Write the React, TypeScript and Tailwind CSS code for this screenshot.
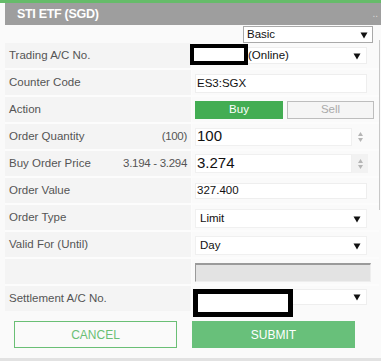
import React from "react";

const Arrow = () => (
  <svg width="8" height="8" viewBox="0 0 8 8" className="shrink-0">
    <path d="M0.5 1.5 H7.5 L4 7.5 Z" fill="#111" />
  </svg>
);

const Spinner = () => (
  <div className="flex flex-col items-center justify-center gap-[2px] w-[16px]">
    <svg width="5" height="4" viewBox="0 0 5 4"><path d="M0 4 L2.5 0 L5 4 Z" fill="#b5b5b5" /></svg>
    <svg width="5" height="4" viewBox="0 0 5 4"><path d="M0 0 L2.5 4 L5 0 Z" fill="#b5b5b5" /></svg>
  </div>
);

function Row({ label, hint, children }: { label: string; hint?: string; children?: React.ReactNode }) {
  return (
    <div className="grid grid-cols-[186px_1fr] gap-x-[1px] h-[25px]">
      <div className="bg-[#f4f4f4] flex items-center justify-between pl-[4px] pr-[4px] pt-[1px] text-[11.5px] text-[#555]">
        <span>{label}</span>
        {hint && <span className="tracking-[-0.3px]">{hint}</span>}
      </div>
      <div className="bg-[#fafafa] flex items-center pl-[3px] relative">{children}</div>
    </div>
  );
}

export default function App() {
  return (
    <div
      className="w-[381px] h-[361px] bg-[#fafafa] relative overflow-hidden"
      style={{ fontFamily: '"Liberation Sans", Arial, sans-serif' }}
    >
      <div className="h-[3px] bg-[#66bb6a]" />
      <div className="ml-[5px] h-[22px] bg-[#9e9e9e] flex items-center pl-[12px] pr-[3px] justify-between">
        <span className="text-white font-bold text-[12.5px] tracking-[-0.3px]">STI ETF (SGD)</span>
        <span className="text-[#d8d8d8] text-[10px] leading-none">..</span>
      </div>
      <div className="ml-[5px] w-[374px] bg-[#fcfcfc] flex flex-col">
        <div className="h-[18px] flex justify-end pr-[6px] bg-[#fafafa]">
          <div className="mt-[1px] w-[130px] h-[17px] bg-white border border-[#a9a9a9] flex items-center justify-between pl-[3px] pr-[4px] text-[11.5px] text-[#111]">
            <span>Basic</span>
            <Arrow />
          </div>
        </div>
        <div className="flex flex-col gap-[2px]">
          <Row label="Trading A/C No.">
            <div className="w-[172px] h-[17px] bg-white border border-[#eeeeee] flex items-center justify-between pl-[52px] pr-[5px] text-[11.5px] text-[#111]">
              <span>(Online)</span>
              <Arrow />
            </div>
            <div className="absolute left-[-2px] top-[1px] w-[58px] h-[21px] border-[4px] border-black bg-white" />
          </Row>
          <Row label="Counter Code">
            <div className="w-[172px] h-[19px] bg-white border border-[#eeeeee] flex items-center pl-[1px] text-[11.5px] text-[#111] mt-[2px]">
              ES3:SGX
            </div>
          </Row>
          <Row label="Action">
            <div className="flex gap-[4px] mt-[1px]">
              <div className="w-[88px] h-[18px] bg-[#43ad53] text-white text-[11.5px] flex items-center justify-center">Buy</div>
              <div className="w-[87px] h-[18px] bg-[#f5f5f5] border border-[#bdbdbd] text-[#aaaaaa] text-[11.5px] flex items-center justify-center">Sell</div>
            </div>
          </Row>
          <Row label="Order Quantity" hint="(100)">
            <div className="flex items-center">
              <div className="w-[157px] h-[18px] bg-white border border-[#f0f0f0] flex items-center pl-[1px] text-[15px] text-[#111]">100</div>
              <Spinner />
            </div>
          </Row>
          <Row label="Buy Order Price" hint="3.194 - 3.294">
            <div className="flex items-center h-[19px] bg-[#f2f2f2]">
              <div className="w-[157px] h-[19px] bg-white border border-[#f0f0f0] flex items-center pl-[1px] text-[15px] text-[#111]">3.274</div>
              <Spinner />
            </div>
          </Row>
          <Row label="Order Value">
            <div className="w-[172px] h-[16px] bg-white border border-[#eeeeee] flex items-center pl-[1px] text-[11.5px] text-[#111]">
              327.400
            </div>
          </Row>
          <Row label="Order Type">
            <div className="w-[172px] h-[19px] bg-white border border-[#f0f0f0] flex items-center justify-between pl-[4px] pr-[5px] text-[11.5px] text-[#111] mt-[2px]">
              <span>Limit</span>
              <Arrow />
            </div>
          </Row>
          <Row label="Valid For (Until)">
            <div className="w-[172px] h-[19px] bg-white border border-[#f0f0f0] flex items-center justify-between pl-[4px] pr-[5px] text-[11.5px] text-[#111] mt-[2px]">
              <span>Day</span>
              <Arrow />
            </div>
          </Row>
          <Row label="">
            <div className="w-[176px] h-[19px] bg-[#e3e3e3] border-t-[2px] border-l border-[#9a9a9a] border-r border-r-[#eeeeee] border-b border-b-[#eeeeee] mt-[2px]" />
          </Row>
          <Row label="Settlement A/C No.">
            <div className="w-[172px] h-[16px] bg-white border border-[#eeeeee] flex items-center justify-end pr-[5px] mt-[-3px]">
              <Arrow />
            </div>
            <div className="absolute left-[1px] top-[3px] w-[100px] h-[28px] border-[5px] border-black bg-white" />
          </Row>
        </div>
        <div className="h-[47px] flex items-start pt-[10px] pl-[9px] gap-[15px] bg-[#fafafa]">
          <div className="w-[163px] h-[27px] border border-[#6abf75] text-[#6abf75] text-[12px] flex items-center justify-center bg-[#fafafa]">
            CANCEL
          </div>
          <div className="w-[163px] h-[27px] bg-[#68c07a] text-white text-[12px] flex items-center justify-center">
            SUBMIT
          </div>
        </div>
      </div>
      <div className="absolute left-0 right-0 bottom-0 h-[3px] bg-[#e2e2e2]" />
      <div className="absolute right-[1px] top-[40px] w-[1px] h-[170px] bg-[#c8c8c8]" />
    </div>
  );
}
